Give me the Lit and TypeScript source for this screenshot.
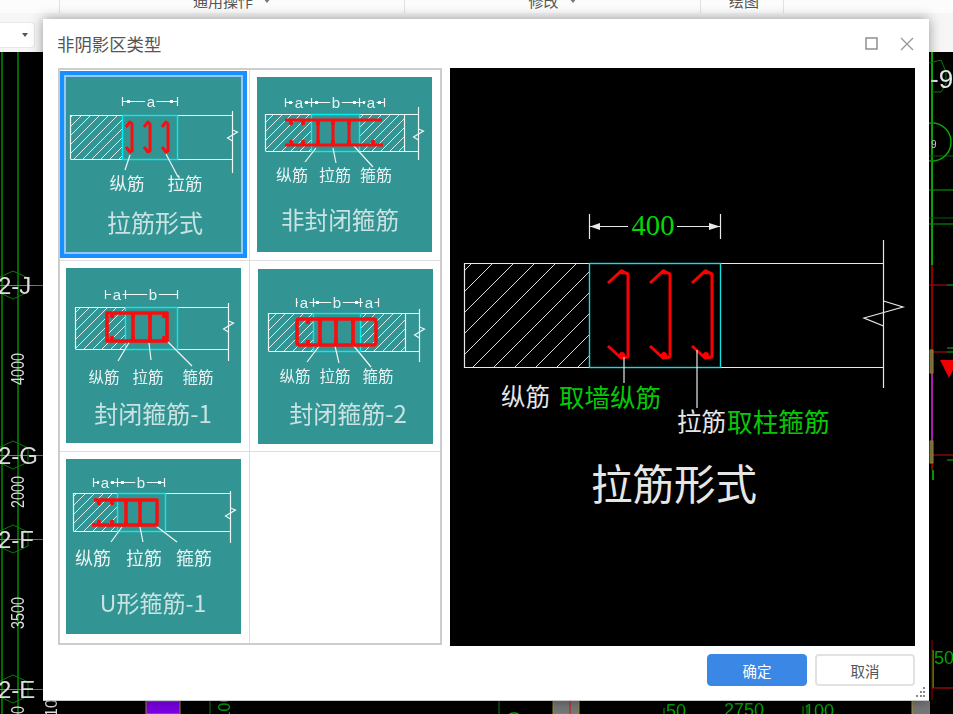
import { LitElement, html, svg, css } from 'lit';
import { customElement, property } from 'lit/decorators.js';

interface ThumbSpec {
  title: string;
  selected?: boolean;
  shift?: boolean;
  wall: [number, number, number, number];
  hatch: [number, number][];
  cyan: [number, number];
  breakX: number;
  breakTop: number;
  breakBottom: number;
  zigY: number;
  dimY: number;
  ticks: number[];
  dots: number[];
  dimLabels: [number, string][];
  rebar: string;
  rebarWidth: number;
  hooks: [number, number][];
  leaders: string;
  labels: [number, string][];
  labelY: number;
  labelSize: number;
  titleX: number;
  titleY: number;
  titleSize: number;
}

const jBar = (x: number) =>
  `M${x - 4} 50 L${x} 45 L${x + 2} 47 V74 L${x} 75 L${x - 4} 70`;

const THUMBS: ThumbSpec[] = [
  {
    title: '拉筋形式',
    selected: true,
    wall: [4, 166, 38, 82],
    hatch: [[4, 56]],
    cyan: [56, 111],
    breakX: 166,
    breakTop: 34,
    breakBottom: 96,
    zigY: 53,
    dimY: 24,
    ticks: [56, 111],
    dots: [62, 105],
    dimLabels: [[85, 'a']],
    rebar: [64, 82, 100].map(jBar).join(' '),
    rebarWidth: 3,
    hooks: [],
    leaders: 'M64 78 L59 93 M100 77 L112 100',
    labels: [[61, '纵筋'], [119, '拉筋']],
    labelY: 105,
    labelSize: 17.5,
    titleX: 89,
    titleY: 144,
    titleSize: 24,
  },
  {
    title: '非封闭箍筋',
    wall: [8, 147, 37, 74],
    hatch: [[8, 54], [102, 147]],
    cyan: [54, 102],
    breakX: 161,
    breakTop: 30,
    breakBottom: 83,
    zigY: 52,
    dimY: 25,
    ticks: [28, 54, 102, 127],
    dots: [33, 49, 59, 97, 107, 122],
    dimLabels: [[42, 'a'], [79, 'b'], [114, 'a']],
    rebar: 'M28 43 H125 M28 68 H126 M61 43 V68 M76 43 V68 M92 43 V68',
    rebarWidth: 3,
    hooks: [[34, 46], [46, 46], [61, 46], [76, 46], [92, 46], [34, 65], [46, 65], [61, 65], [76, 65], [92, 65], [116, 65]],
    leaders: 'M59 71 L48 85 M76 71 L79 86 M96 68 L116 90',
    labels: [[35, '纵筋'], [78, '拉筋'], [119, '箍筋']],
    labelY: 97,
    labelSize: 16,
    titleX: 83,
    titleY: 142,
    titleSize: 23.6,
  },
  {
    title: '封闭箍筋-1',
    wall: [9, 162, 39, 81],
    hatch: [[9, 59]],
    cyan: [59, 111],
    breakX: 162,
    breakTop: 35,
    breakBottom: 93,
    zigY: 53,
    dimY: 26,
    ticks: [39, 59, 111],
    dots: [],
    dimLabels: [[51, 'a'], [87, 'b']],
    rebar: 'M41 45 H101 V73 H41 Z M67 45 V73 M84 45 V73',
    rebarWidth: 3.6,
    hooks: [[46, 48], [67, 48], [84, 48], [98, 48], [46, 70], [67, 70], [84, 70], [98, 70]],
    leaders: 'M64 73 L52 93 M83 75 L85 92 M101 73 L126 98',
    labels: [[38, '纵筋'], [82, '拉筋'], [132, '箍筋']],
    labelY: 108,
    labelSize: 15.5,
    titleX: 87,
    titleY: 144,
    titleSize: 24,
  },
  {
    title: '封闭箍筋-2',
    shift: true,
    wall: [10, 147, 44, 82],
    hatch: [[10, 55], [102, 147]],
    cyan: [55, 102],
    breakX: 161,
    breakTop: 40,
    breakBottom: 93,
    zigY: 58,
    dimY: 33,
    ticks: [38, 55, 102, 120],
    dots: [59, 98],
    dimLabels: [[46, 'a'], [79, 'b'], [111, 'a']],
    rebar: 'M41 50 H115 Q118 50 118 53 V73 Q118 76 115 76 H41 Q39 76 39 73 V53 Q39 50 41 50 Z M62 50 V76 M78 50 V76 M95 50 V76',
    rebarWidth: 3.6,
    hooks: [[50, 53], [62, 53], [78, 53], [95, 53], [50, 73], [62, 73], [78, 73], [95, 73]],
    leaders: 'M62 76 L49 93 M77 77 L81 94 M95 76 L113 98',
    labels: [[37, '纵筋'], [77, '拉筋'], [120, '箍筋']],
    labelY: 106,
    labelSize: 15.5,
    titleX: 90,
    titleY: 143,
    titleSize: 24,
  },
  {
    title: 'U形箍筋-1',
    wall: [7, 164, 34, 72],
    hatch: [[7, 51]],
    cyan: [51, 99],
    breakX: 164,
    breakTop: 32,
    breakBottom: 84,
    zigY: 49,
    dimY: 23,
    ticks: [27, 51, 98],
    dots: [32, 46, 56, 93],
    dimLabels: [[39, 'a'], [75, 'b']],
    rebar: 'M28 41 H91 V66 H26 M60 41 V66 M74 41 V66',
    rebarWidth: 3.4,
    hooks: [[33, 44], [46, 44], [60, 44], [74, 44], [33, 63], [46, 63], [60, 63], [74, 63]],
    leaders: 'M56 68 L45 83 M74 68 L77 83 M90 67 L111 83',
    labels: [[27, '纵筋'], [78, '拉筋'], [128, '箍筋']],
    labelY: 98,
    labelSize: 18,
    titleX: 87,
    titleY: 143,
    titleSize: 23,
  },
];

/** Teal CAD thumbnail of one wall section type */
@customElement('rebar-thumb')
export class RebarThumb extends LitElement {
  @property({ attribute: false })
  spec!: ThumbSpec;

  static styles = css`
    :host {
      display: block;
      width: 175px;
      height: 175px;
    }

    svg {
      display: block;
      background: #339494;
      filter: blur(0.3px);
    }

    text {
      font-family: "Noto Sans CJK SC", sans-serif;
      font-weight: 400;
      fill: #eaf3f3;
      text-anchor: middle;
      dominant-baseline: central;
    }

    .dim {
      font-family: "Liberation Sans", sans-serif;
      paint-order: stroke;
      stroke: #339494;
      stroke-width: 5px;
    }

    .title {
      fill: #c9e2e2;
    }

    .line {
      fill: none;
      stroke: #eef6f6;
      stroke-width: 1.2;
    }

    .cyan {
      fill: none;
      stroke: #00f0f0;
      stroke-width: 1.4;
    }

    .bar {
      fill: none;
      stroke: #fb0d0d;
    }
  `;

  render() {
    const s = this.spec;
    const [x0, x1, y0, y1] = s.wall;
    const first = s.ticks[0];
    const last = s.ticks[s.ticks.length - 1];
    return html`
      <svg width="175" height="175" viewBox="0 0 175 175">
        <defs>
          <pattern id="h" width="9" height="9" patternUnits="userSpaceOnUse">
            <path d="M-1 10 L10 -1" stroke="#dcecec" stroke-width="1" />
          </pattern>
        </defs>
        ${s.hatch.map(([a, b]) => svg`<rect x=${a} y=${y0} width=${b - a} height=${y1 - y0} fill="url(#h)" />`)}
        <path class="line" d="M${x0 + 0.5} ${y0 + 0.5} H${s.breakX} M${x0 + 0.5} ${y1 + 0.5} H${s.breakX} M${x0 + 0.5} ${y0} V${y1}" />
        ${s.hatch.length > 1 ? svg`<path class="line" d="M${x1 + 0.5} ${y0} V${y1}" />` : ''}
        <path class="line" d="M${s.breakX + 0.5} ${s.breakTop} V${s.breakBottom}" />
        <path class="line" d="M${s.breakX + 0.5} ${s.zigY} l5 2 l-10 6 l5 3" />
        <rect class="cyan" x=${s.cyan[0] + 0.5} y=${y0 + 0.5} width=${s.cyan[1] - s.cyan[0]} height=${y1 - y0} />

        <path class="line" d="M${first} ${s.dimY + 0.5} H${last}" />
        ${s.ticks.map((t) => svg`<path class="line" d="M${t + 0.5} ${s.dimY - 4} V${s.dimY + 5}" />`)}
        ${s.dots.map((d) => svg`<rect x=${d - 1} y=${s.dimY - 1} width="3" height="3" fill="#f2f8f8" />`)}
        ${s.dimLabels.map(([x, t]) => svg`<text class="dim" x=${x} y=${s.dimY} font-size="15">${t}</text>`)}

        <path class="line" d=${s.leaders} />
        <path class="bar" d=${s.rebar} stroke-width=${s.rebarWidth} stroke-linejoin="round" />
        ${s.hooks.map(([x, y]) => svg`<circle cx=${x} cy=${y} r="2.2" fill="#fb0d0d" />`)}

        ${s.labels.map(([x, t]) => svg`<text x=${x} y=${s.labelY} font-size=${s.labelSize}>${t}</text>`)}
        <text class="title" x=${s.titleX} y=${s.titleY} font-size=${s.titleSize}>${s.title}</text>
      </svg>
    `;
  }
}

const previewBar = (dx: number) =>
  `M${608 + dx} 283 L${621 + dx} 271 L${628 + dx} 274 V357 L${621 + dx} 358 L${608 + dx} 346`;

const HEX_LEFT = [285, 455, 539, 689];

@customElement('app-root')
export class AppRoot extends LitElement {
  static styles = css`
    :host {
      display: block;
      position: relative;
      width: 953px;
      height: 714px;
      overflow: hidden;
      background: #000;
      font-family: "Noto Sans CJK SC", sans-serif;
    }

    .toolbar {
      height: 52px;
      background: #f6f6f6;
    }

    .ribbon {
      display: flex;
      height: 13px;
      overflow: hidden;
      background: #fcfcfc;
      color: #555;
      font-size: 15px;
      line-height: 13px;
    }

    .group {
      display: flex;
      justify-content: center;
      align-items: flex-end;
      gap: 10px;
      padding-bottom: 6px;
      border-left: 1px solid #e2e2e2;
      box-sizing: border-box;
    }

    .group.g0 { width: 59px; border-left: none; }
    .group.g1 { width: 345px; }
    .group.g2 { width: 296px; }
    .group.g3 { width: 84px; padding-left: 4px; border-right: 1px solid #e2e2e2; }

    .caret {
      width: 0;
      height: 0;
      border: 4px solid transparent;
      border-top: 5px solid #777;
      border-bottom: none;
      margin-bottom: 4px;
    }

    .combo {
      display: flex;
      justify-content: flex-end;
      align-items: center;
      width: 35px;
      height: 26px;
      margin-top: 9px;
      padding-right: 6px;
      box-sizing: border-box;
      background: #fff;
      border: 1px solid #e8e8e8;
      border-left: none;
      border-radius: 0 4px 4px 0;
    }

    .combo .caret {
      border-width: 3px;
      border-top: 4px solid #555;
      border-bottom: none;
      margin: 0;
    }

    .canvas {
      position: absolute;
      left: 0;
      top: 52px;
      filter: blur(0.3px);
    }

    .canvas text {
      font-family: "Liberation Sans", sans-serif;
    }

    .dialog {
      position: absolute;
      left: 43px;
      top: 19px;
      width: 886px;
      height: 681px;
      display: flex;
      flex-direction: column;
      background: #fff;
      border-bottom: 1px solid #c8c8c8;
      box-shadow: 0 0 12px rgba(0, 0, 0, 0.4);
    }

    .head {
      display: flex;
      align-items: center;
      height: 49px;
      padding: 0 15px 0 14px;
      box-sizing: border-box;
      color: #555;
      font-size: 17.4px;
    }

    .head .name {
      flex: 1;
    }

    .head svg {
      display: block;
      margin-left: 22px;
    }

    .body {
      display: flex;
      gap: 8px;
      padding: 0 14px 0 15px;
    }

    .gallery {
      display: grid;
      grid-template-columns: 189px 190px;
      grid-template-rows: 190px 190px 191px;
      gap: 1px;
      width: 384px;
      height: 577px;
      box-sizing: border-box;
      background: #dedede;
      border: 2px solid #cdcdcd;
    }

    .cell {
      background: #fff;
      padding: 7px 0 0 6px;
      box-sizing: border-box;
    }

    .cell.right {
      padding-left: 7px;
    }

    .cell.shift {
      padding: 8px 0 0 8px;
    }

    .cell.selected rebar-thumb {
      box-shadow: 0 0 0 2px #96c6fb, 0 0 0 6px #1890ff;
    }

    .preview {
      display: block;
      background: #000;
    }

    .preview text {
      font-family: "Noto Sans CJK SC", sans-serif;
      dominant-baseline: central;
      fill: #e6e6e6;
    }

    .preview .green {
      fill: #06c806;
    }

    .preview .num {
      font-family: "Liberation Serif", serif;
      fill: #04d804;
      text-anchor: middle;
    }

    .preview .white {
      fill: none;
      stroke: #e8e8e8;
      stroke-width: 1.2;
    }

    .preview .teal {
      fill: none;
      stroke: #10e0e0;
      stroke-width: 1.4;
    }

    .foot {
      display: flex;
      justify-content: flex-end;
      gap: 8px;
      padding: 8px 14px 0 0;
    }

    button {
      width: 100px;
      height: 32px;
      padding: 0;
      border-radius: 4px;
      box-sizing: border-box;
      font-family: inherit;
      font-size: 14.5px;
    }

    .primary {
      background: #3a87e6;
      border: 1px solid #3a87e6;
      color: #fff;
    }

    .plain {
      background: #fff;
      border: 2px solid #e2e2e2;
      color: #555;
    }

    .grip {
      position: absolute;
      right: 3px;
      bottom: 3px;
    }
  `;

  private renderCanvas() {
    return html`
      <svg class="canvas" width="953" height="662" viewBox="0 52 953 662">
        <g fill="none" stroke="#00b000" stroke-width="1.2">
          <path d="M2 52 V714 M18 52 V714" />
          ${HEX_LEFT.map((y) => svg`<path d="M0 ${y + 0.5} H43" stroke="#00d000" />`)}
        </g>
        <g fill="none" stroke="#0a7a0a" stroke-width="1">
          ${HEX_LEFT.map((y) => svg`<path d="M13 ${y - 14} L28 ${y - 7} V${y + 7} L13 ${y + 14} L-2 ${y + 7} V${y - 7} Z" />`)}
        </g>
        <g fill="#dcdcdc" font-size="24">
          <text x="-2" y="294">2-J</text>
          <text x="-2" y="464">2-G</text>
          <text x="-2" y="548">2-F</text>
          <text x="-2" y="698">2-E</text>
        </g>
        <g fill="#dcdcdc" font-size="16" text-anchor="middle">
          <text transform="translate(24 369) rotate(-90) scale(0.9 1.2)">4000</text>
          <text transform="translate(24 492) rotate(-90) scale(0.9 1.2)">2000</text>
          <text transform="translate(24 613) rotate(-90) scale(0.9 1.2)">3500</text>
          <text transform="translate(24 714) rotate(-90) scale(0.9 1.2)">00</text>
          <text transform="translate(57 708) rotate(-90)">10</text>
        </g>

        <!-- bottom strip -->
        <rect x="146" y="701" width="34" height="13" fill="#7a00e6" stroke="#a08a20" />
        <path d="M210 701 V714 M499 701 V714" stroke="#0a8a0a" />
        <g fill="#00a800" font-size="16" text-anchor="middle">
          <text transform="translate(230 707) rotate(-90)">100</text>
          <text transform="translate(520 716) rotate(-90)">0</text>
          <text x="676" y="717" font-size="18">50</text>
          <text x="744" y="716" font-size="18">2750</text>
          <text x="819" y="717" font-size="18">100</text>
        </g>
        <path d="M803 706 V714 M807 706 V714 M664 708 V714" stroke="#00a800" />
        <rect x="553" y="701" width="26" height="13" fill="#777" stroke="#a08a20" />
        <path d="M570 701 V714" stroke="#e01010" />

        <!-- right edge -->
        <path d="M932 52 V265" stroke="#08b808" stroke-width="2" fill="none" />
        <path d="M932 265 V350 M932 455 V470" stroke="#a00000" stroke-width="2" />
        <path d="M932 373 V441" stroke="#c020c0" stroke-width="2" />
        <path d="M933 470 V480 M933 650 V688" stroke="#00a800" stroke-width="2" />
        <path d="M932 640 V700" stroke="#b00000" />
        <path d="M932 688 H953" stroke="#d01010" />
        <path d="M929 156 H953" stroke="#066006" />
        <path d="M929 190 H953 M929 224 H953" stroke="#08a808" />
        <path d="M929 218 H953" stroke="#066006" />
        <path d="M929 285 H947" stroke="#c01010" />
        <path d="M947 285 H953 M947 348 H953 M947 352 H953 M947 460 H953" stroke="#08b808" />
        <path d="M929 352 H947 M929 455 H953" stroke="#c01010" />
        <path d="M929 63 L941 60 L946 72 L946 84 L941 92 L932 92" fill="none" stroke="#0a7a0a" />
        <circle cx="932" cy="142" r="19" fill="none" stroke="#08a808" stroke-width="1.5" />
        <text x="930" y="88" font-size="26" fill="#e6e6e6">-9</text>
        <text x="931" y="148" font-size="10" fill="#dcdcdc">9</text>
        <rect x="930" y="350" width="3" height="23" fill="#777" stroke="#b09a20" />
        <rect x="930" y="441" width="3" height="22" fill="#777" stroke="#b09a20" />
        <path d="M940 360 H958 L949 378 Z" fill="#f00000" />
        <text x="934" y="664" font-size="18" fill="#00a800">50</text>
        <rect x="912" y="701" width="18" height="13" fill="#777" />
        <path d="M912 701 V714" stroke="#b09a20" />
      </svg>
    `;
  }

  private renderPreview() {
    return html`
      <svg class="preview" width="465" height="578" viewBox="450 68 465 578">
        <defs>
          <pattern id="big" width="21" height="21" patternUnits="userSpaceOnUse">
            <path d="M-1 22 L22 -1" stroke="#d8d8d8" stroke-width="1" />
          </pattern>
        </defs>
        <rect x="464" y="263" width="125" height="104" fill="url(#big)" />
        <path class="white" d="M464.5 263.5 H883 M464.5 367.5 H883 M464.5 263 V368" />
        <path class="white" d="M883.5 240 V388" />
        <path class="white" d="M883.5 301 L903 307 L864 318 L883.5 326" />
        <rect class="teal" x="589.5" y="263.5" width="131" height="104" />

        <path class="white" d="M589.5 214 V239 M720.5 214 V239 M590 226.5 H628 M677 226.5 H720" />
        <path d="M590 226.5 L600 223 V230 Z M720 226.5 L709 223 V230 Z" fill="#e8e8e8" />
        <text class="num" x="653" y="225" font-size="28.6">400</text>

        ${[0, 42, 84].map((dx) => svg`
          <path d=${previewBar(dx)} fill="none" stroke="#fa0000" stroke-width="3" stroke-linejoin="round" />
          <circle cx=${622 + dx} cy="272" r="2.5" fill="#fa0000" />
          <circle cx=${622 + dx} cy="355" r="3" fill="#fa0000" />
        `)}
        <path class="white" d="M624 357 V383 M697 350 V408" />

        <text x="501" y="395" font-size="24.5">纵筋</text>
        <text class="green" x="559" y="395" font-size="25.5">取墙纵筋</text>
        <text x="677" y="420" font-size="24.5">拉筋</text>
        <text class="green" x="727" y="420" font-size="25.7">取柱箍筋</text>
        <text x="591" y="482" font-size="41.5">拉筋形式</text>
      </svg>
    `;
  }

  render() {
    return html`
      <div class="toolbar">
        <div class="ribbon">
          <div class="group g0"></div>
          <div class="group g1">通用操作<span class="caret"></span></div>
          <div class="group g2">修改<span class="caret"></span></div>
          <div class="group g3">绘图</div>
        </div>
        <div class="combo"><span class="caret"></span></div>
      </div>
      ${this.renderCanvas()}
      <section class="dialog">
        <header class="head">
          <span class="name">非阴影区类型</span>
          <svg width="13" height="13" viewBox="0 0 13 13">
            <rect x="1" y="1" width="11" height="11" fill="none" stroke="#888" stroke-width="1.4" />
          </svg>
          <svg width="14" height="14" viewBox="0 0 14 14">
            <path d="M1 1 L13 13 M13 1 L1 13" stroke="#999" stroke-width="1.4" />
          </svg>
        </header>
        <div class="body">
          <div class="gallery">
            ${THUMBS.map(
              (t, i) => html`
                <div class="cell ${i % 2 ? 'right' : ''} ${t.selected ? 'selected' : ''} ${t.shift ? 'shift' : ''}">
                  <rebar-thumb .spec=${t}></rebar-thumb>
                </div>
              `
            )}
            <div class="cell"></div>
          </div>
          ${this.renderPreview()}
        </div>
        <footer class="foot">
          <button class="primary">确定</button>
          <button class="plain">取消</button>
        </footer>
        <svg class="grip" width="10" height="10" viewBox="0 0 10 10" fill="#8a8a8a">
          <rect x="7" y="0" width="2" height="2" />
          <rect x="4" y="4" width="2" height="2" />
          <rect x="7" y="4" width="2" height="2" />
          <rect x="0" y="8" width="2" height="2" />
          <rect x="4" y="8" width="2" height="2" />
          <rect x="7" y="8" width="2" height="2" />
        </svg>
      </section>
    `;
  }
}
